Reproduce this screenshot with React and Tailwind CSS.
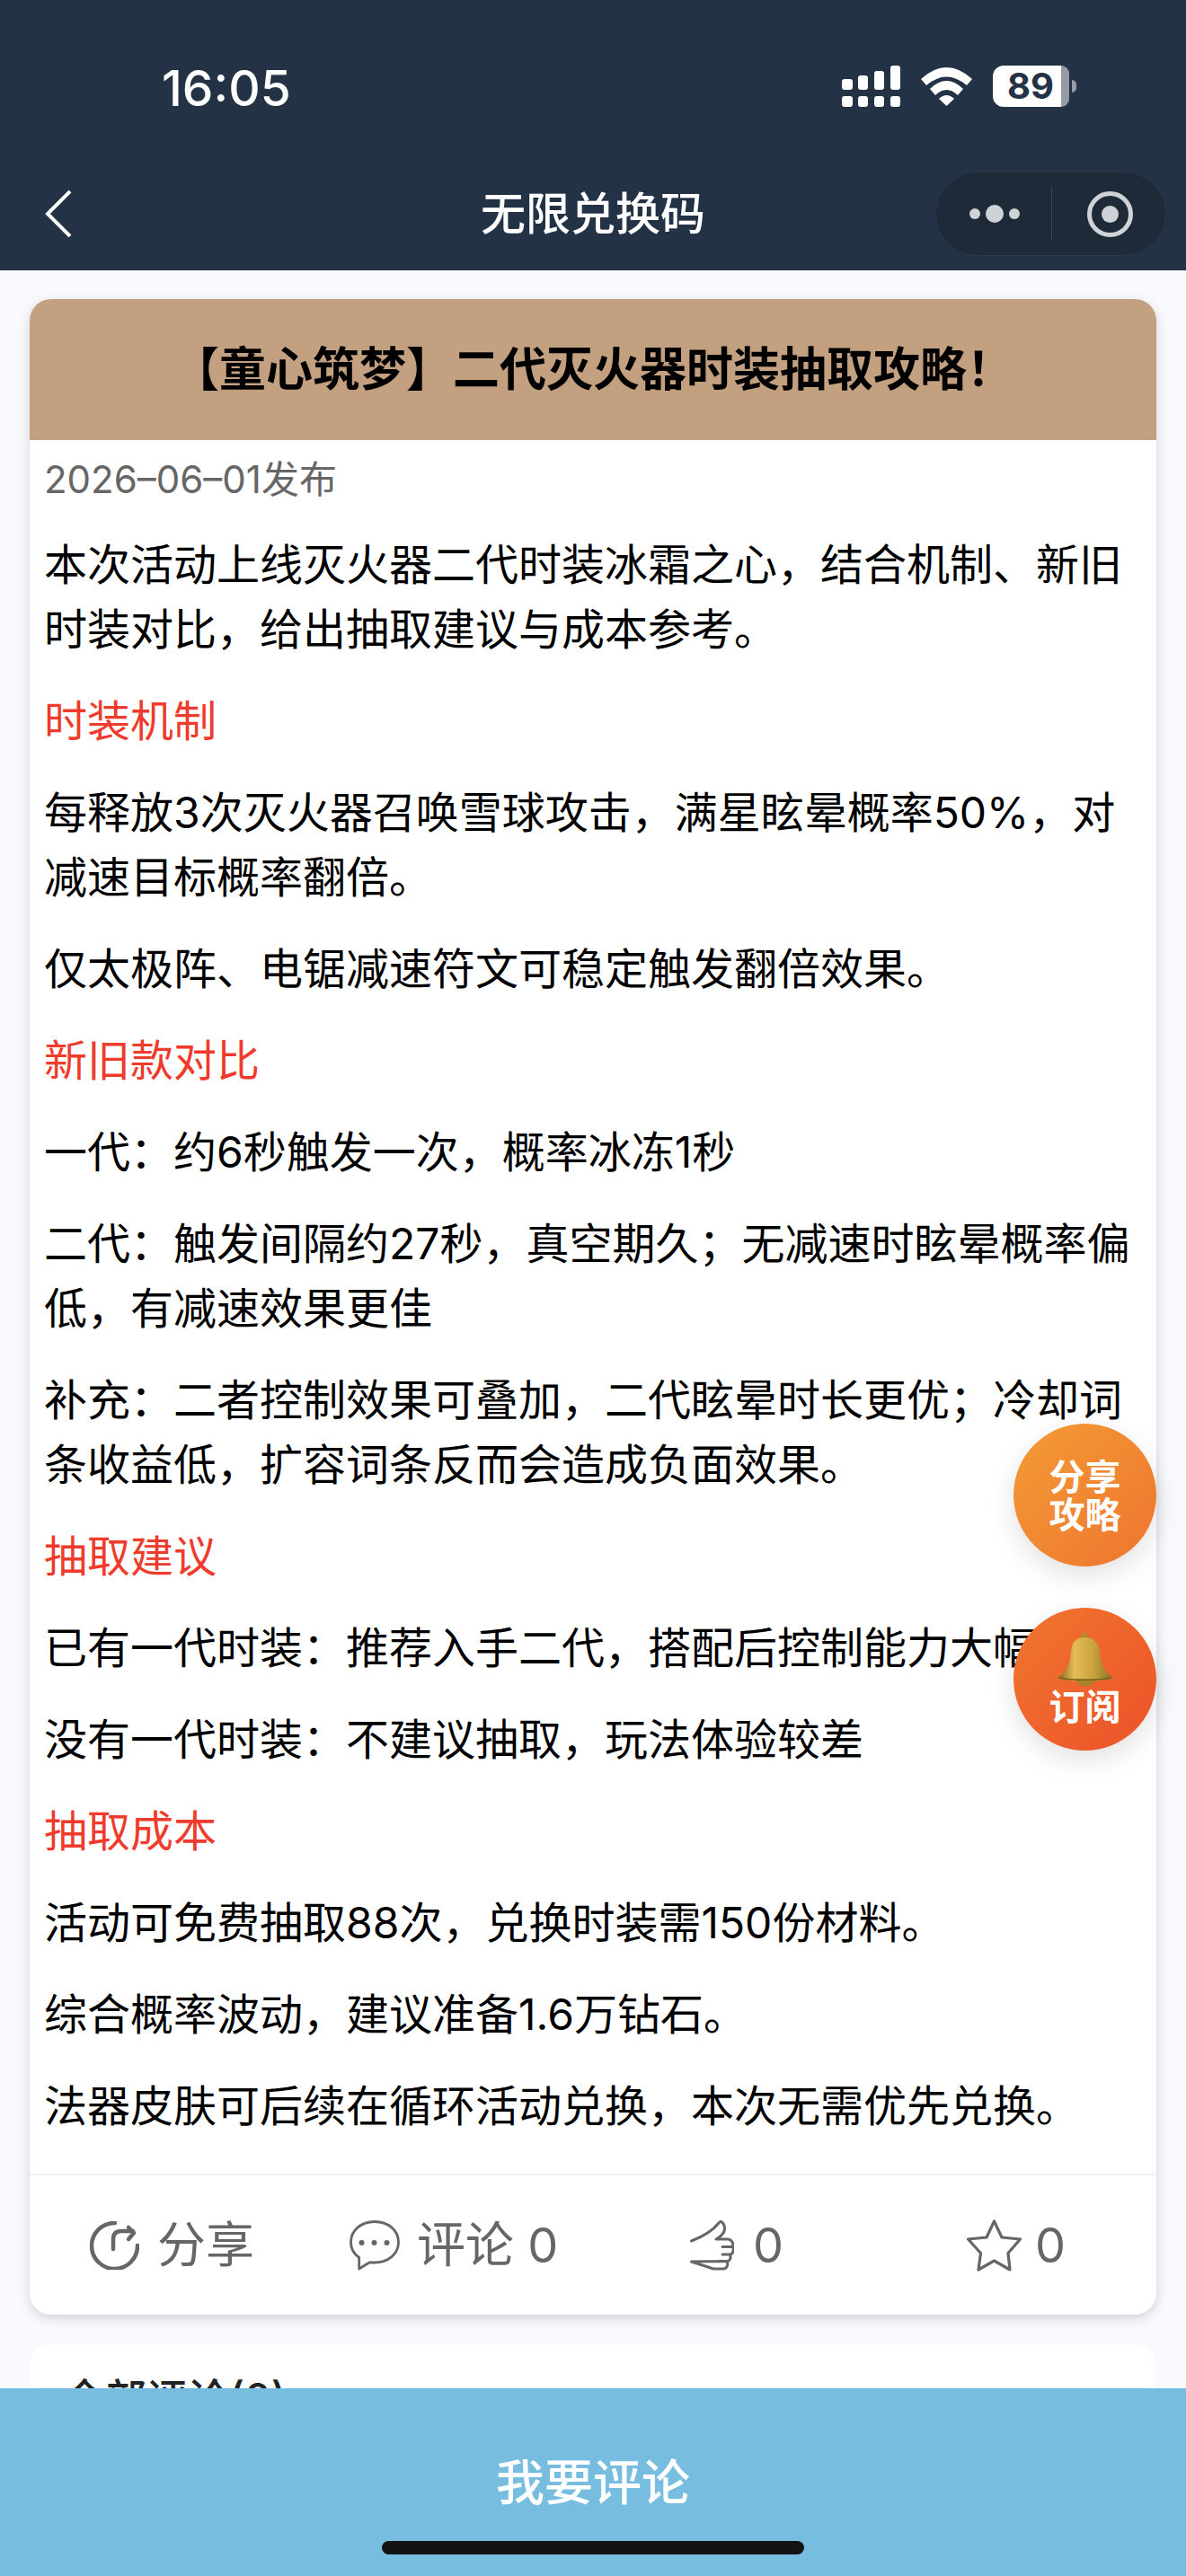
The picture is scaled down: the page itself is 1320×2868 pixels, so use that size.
import React from 'react';

const font = "font-['Inter','Noto_Sans_CJK_SC',sans-serif]";

function Para({ children }) {
  return <p className="mb-[30px] text-[48px] leading-[72px] text-black">{children}</p>;
}

function Heading({ children }) {
  return <p className="mb-[30px] text-[48px] leading-[72px] text-[#ee3b2c]">{children}</p>;
}

function StatusBar() {
  return (
    <div className="flex items-start justify-between pt-[73px] pl-[180px] pr-[122px]">
      <span className="text-[55px] leading-[50px] font-medium text-white">16:05</span>
      <div className="flex items-center gap-[23px]">
        <svg width="65" height="46" viewBox="0 0 65 46" fill="#fff">
          <rect x="0" y="15" width="12" height="12" rx="3" />
          <rect x="18" y="11" width="11" height="16" rx="3" />
          <rect x="36" y="6" width="11" height="21" rx="3" />
          <rect x="54" y="0" width="11" height="27" rx="3" />
          <rect x="0" y="34" width="12" height="12" rx="3" />
          <rect x="18" y="34" width="11" height="12" rx="3" />
          <rect x="36" y="34" width="11" height="12" rx="3" />
          <rect x="54" y="34" width="11" height="12" rx="3" />
        </svg>
        <svg width="57" height="43" viewBox="0 0 57 43" fill="#fff">
          <path d="M0 13 Q28.5 -13 57 13 L51 20 Q28.5 1 6 20 Z" />
          <path d="M10 24 Q28.5 6 47 24 L41 31 Q28.5 19 16 31 Z" />
          <path d="M20 35 Q28.5 27 37 35 L28.5 43 Z" />
        </svg>
        <div className="flex items-center">
          <div className="flex h-[46px] w-[85px]">
            <span className="w-[76px] rounded-l-[12px] bg-white pl-[8px] text-center text-[40px] leading-[46px] font-bold text-[#243246]">89</span>
            <span className="w-[9px] rounded-r-[12px] bg-[#959ca6]" />
          </div>
          <span className="ml-[3px] h-[14px] w-[5px] rounded-r-full bg-[#959ca6]" />
        </div>
      </div>
    </div>
  );
}

function NavBar() {
  return (
    <div className="mt-[68px] grid h-[94px] grid-cols-[257px_1fr_257px] items-center px-[22px]">
      <svg className="ml-[28px]" width="30" height="52" viewBox="0 0 30 52" fill="none" stroke="#fff" strokeWidth="4">
        <path d="M28 1 L3 26 L28 51" />
      </svg>
      <span className="text-center text-[50px] leading-[60px] font-medium text-white">无限兑换码</span>
      <div className="flex h-[94px] items-center rounded-full border border-[#2a3749] bg-[#1f2a38]">
        <div className="flex w-[128px] items-center justify-center gap-[6px] pl-[2px]">
          <span className="h-[12px] w-[12px] rounded-full bg-[#cfd2d6]" />
          <span className="h-[20px] w-[20px] rounded-full bg-[#cfd2d6]" />
          <span className="h-[12px] w-[12px] rounded-full bg-[#cfd2d6]" />
        </div>
        <span className="h-[60px] w-px bg-[#37424f]" />
        <div className="flex flex-1 items-center justify-center pl-[2px]">
          <span className="flex h-[51px] w-[51px] items-center justify-center rounded-full border-[5px] border-[#cfd2d6]">
            <span className="h-[19px] w-[19px] rounded-full bg-[#cfd2d6]" />
          </span>
        </div>
      </div>
    </div>
  );
}

function Action({ icon, label, className }) {
  return (
    <div className={"flex items-center text-[54px] leading-[60px] text-[#666] " + className}>
      {icon}
      <span>{label}</span>
    </div>
  );
}

function Actions() {
  return (
    <div className="flex h-[157px] items-center border-t-[2px] border-[#f0f0f2]">
      <Action
        className="ml-[67px] w-[289px] gap-[20px]"
        label="分享"
        icon={
          <svg width="55" height="54" viewBox="0 0 55 54" fill="none" stroke="#666" strokeWidth="4.5" strokeLinecap="round" strokeLinejoin="round">
            <path d="M28 2 A25.5 25.5 0 1 0 53 27" />
            <path d="M26 31 V20 Q26 11 35 11 H48" />
            <path d="M43 7 L49 13 L43 20" />
          </svg>
        }
      />
      <Action
        className="w-[379px] gap-[19px]"
        label="评论 0"
        icon={
          <svg width="56" height="56" viewBox="0 0 56 56" fill="none" stroke="#666" strokeWidth="2.8" strokeLinejoin="round">
            <path d="M28 1.5 C13 1.5 1.5 11 1.5 24.5 C1.5 31.5 5 37.5 10.7 41.5 V54 L22 47 H28 C43 47 54.5 37.5 54.5 24.5 C54.5 11 43 1.5 28 1.5 Z" />
            <circle cx="13.5" cy="25" r="3" fill="#666" stroke="none" />
            <circle cx="27.5" cy="25" r="3" fill="#666" stroke="none" />
            <circle cx="41.5" cy="25" r="3" fill="#666" stroke="none" />
          </svg>
        }
      />
      <Action
        className="w-[308px] gap-[21px]"
        label="0"
        icon={
          <svg width="49" height="56" viewBox="0 0 49 56" fill="none" stroke="#666" strokeWidth="3" strokeLinejoin="round" strokeLinecap="round">
            <path d="M1.5 23 C12 19 24 13 32 3 C34 0 37 2 38 6 C40 12 36 17 29 21 H42 C46 21 49 26 47.5 29.5 H36 M47.5 29.5 C49 33 48 38 44 38 H36 M44 38 C46 41 45 45.5 41 45.5 H32 M41 45.5 C43 49 41 54 37 54 H26 L1.5 46 Z" />
          </svg>
        }
      />
      <Action
        className="gap-[15px]"
        label="0"
        icon={
          <svg width="61" height="58" viewBox="0 0 61 58" fill="none" stroke="#666" strokeWidth="3.2" strokeLinejoin="round">
            <path d="M30.5 2 L39 20 L59.5 22 L46 37.5 L48 56 L30.5 46 L13 56 L15.5 37.5 L1.5 22 L22 20 Z" />
          </svg>
        }
      />
    </div>
  );
}

function FloatButton({ className, children }) {
  return (
    <div className={"absolute left-[1128px] flex h-[159px] w-[159px] flex-col items-center justify-center rounded-full text-[40px] leading-[42px] font-bold text-white shadow-[0_10px_30px_rgba(0,0,0,0.12)] " + className}>
      {children}
    </div>
  );
}

function Bell() {
  return (
    <svg width="62" height="60" viewBox="0 0 62 60">
      <defs>
        <linearGradient id="bellFill" x1="0" y1="0" x2="1" y2="0">
          <stop offset="0" stopColor="#7f6420" />
          <stop offset="0.3" stopColor="#e3bd55" />
          <stop offset="0.65" stopColor="#c9a23c" />
          <stop offset="1" stopColor="#857124" />
        </linearGradient>
      </defs>
      <circle cx="30" cy="3.5" r="3.5" fill="#b08a2c" />
      <path d="M30 5 C22 5 16 9 15 20 C14 34 12 42 0 50 C8 55 54 55 62 50 C50 42 48 34 47 20 C46 9 38 5 30 5 Z" fill="url(#bellFill)" />
      <path d="M20 52 C23 62 39 62 42 52 Z" fill="#a8822c" />
      <path d="M3 50 C14 53 48 53 59 50" fill="none" stroke="#7a5f1c" strokeWidth="1.5" />
    </svg>
  );
}

export default function App() {
  return (
    <div className={"relative h-[2868px] overflow-hidden bg-[#f9fafe] " + font}>
      <div className="h-[301px] bg-[#243246]">
        <StatusBar />
        <NavBar />
      </div>

      <div className="px-[33px] pt-[32px]">
        <div className="overflow-hidden rounded-[24px] bg-white shadow-[0_4px_14px_rgba(0,0,0,0.16)]">
          <div className="flex h-[157px] items-center justify-center bg-[#c3a07f] text-[52px] leading-[60px] font-bold text-black">
            【童心筑梦】二代灭火器时装抽取攻略！
          </div>
          <div className="px-[16px] pt-[14px] pb-[9px]">
            <p className="mb-[29px] text-[42px] leading-[60px] text-[#666]">2026–06–01发布</p>
            <Para>本次活动上线灭火器二代时装冰霜之心，结合机制、新旧时装对比，给出抽取建议与成本参考。</Para>
            <Heading>时装机制</Heading>
            <Para>每释放3次灭火器召唤雪球攻击，满星眩晕概率50%，对减速目标概率翻倍。</Para>
            <Para>仅太极阵、电锯减速符文可稳定触发翻倍效果。</Para>
            <Heading>新旧款对比</Heading>
            <Para>一代：约6秒触发一次，概率冰冻1秒</Para>
            <Para>二代：触发间隔约27秒，真空期久；无减速时眩晕概率偏低，有减速效果更佳</Para>
            <Para>补充：二者控制效果可叠加，二代眩晕时长更优；冷却词条收益低，扩容词条反而会造成负面效果。</Para>
            <Heading>抽取建议</Heading>
            <Para>已有一代时装：推荐入手二代，搭配后控制能力大幅提升</Para>
            <Para>没有一代时装：不建议抽取，玩法体验较差</Para>
            <Heading>抽取成本</Heading>
            <Para>活动可免费抽取88次，兑换时装需150份材料。</Para>
            <Para>综合概率波动，建议准备1.6万钻石。</Para>
            <Para>法器皮肤可后续在循环活动兑换，本次无需优先兑换。</Para>
          </div>
          <Actions />
        </div>

        <div className="mt-[33px] h-[300px] rounded-[24px] bg-white px-[38px] pt-[24px] text-[46px] leading-[72px] font-medium text-[#222]">
          全部评论(0)
        </div>
      </div>

      <FloatButton className="top-[1585px] bg-gradient-to-br from-[#f39b35] to-[#ee7430] pt-[3px]">
        <span>分享</span>
        <span>攻略</span>
      </FloatButton>
      <FloatButton className="top-[1790px] bg-gradient-to-br from-[#f0762f] to-[#ec5029]">
        <Bell />
        <span className="mt-[2px]">订阅</span>
      </FloatButton>

      <div className="absolute inset-x-0 bottom-0 flex h-[209px] flex-col items-center bg-[#77bde0]">
        <span className="mt-[74px] text-[54px] leading-[64px] font-medium text-white">我要评论</span>
        <span className="absolute bottom-[24px] h-[15px] w-[470px] rounded-full bg-[#131313]" />
      </div>
    </div>
  );
}
